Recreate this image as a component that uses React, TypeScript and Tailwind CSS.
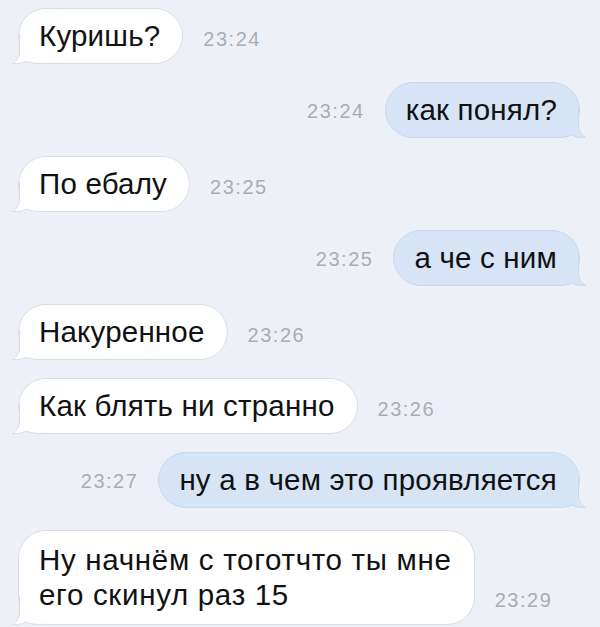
import React from 'react';

type Msg = { text: React.ReactNode; time: string; out?: boolean; multi?: boolean };

const messages: Msg[] = [
  { text: 'Куришь?', time: '23:24' },
  { text: 'как понял?', time: '23:24', out: true },
  { text: 'По ебалу', time: '23:25' },
  { text: 'а че с ним', time: '23:25', out: true },
  { text: 'Накуренное', time: '23:26' },
  { text: 'Как блять ни странно', time: '23:26' },
  { text: 'ну а в чем это проявляется', time: '23:27', out: true },
  {
    text: (
      <>
        Ну начнём с тоготчто ты мне
        <br />
        его скинул раз 15
      </>
    ),
    time: '23:29',
    multi: true,
  },
];

const Tail = ({ out }: { out?: boolean }) => (
  <svg
    width="30"
    height="30"
    viewBox="0 0 30 30"
    className={
      out
        ? 'absolute right-[-7px] bottom-[-1px] -scale-x-100'
        : 'absolute left-[-7px] bottom-[-1px]'
    }
  >
    <path
      d="M8 0 L8 17 C8 23 5 27 0.5 29.5 C6 30 11 29 14.5 27 C18 29 23 29.5 30 29.5 L30 0 Z"
      fill={out ? '#d6e4f6' : '#ffffff'}
    />
    <path
      d="M7.5 0 L7.5 17 C7.5 23 4.5 27 0.5 29.5 C6 30 11 29 14.5 27 C18 29 23 29.5 30 29.5"
      fill="none"
      stroke={out ? '#c8d7ec' : '#d7dde5'}
      strokeWidth="1"
    />
  </svg>
);

const Time = ({ value, className }: { value: string; className?: string }) => (
  <span className={`text-[20px] leading-none tracking-[1.5px] text-[#a9adb3] ${className ?? ''}`}>
    {value}
  </span>
);

export default function App() {
  return (
    <div
      className="min-h-screen w-full bg-[#edf1f7] pt-2 flex flex-col gap-[18px] overflow-hidden"
      style={{ fontFamily: '"Liberation Sans", Arial, sans-serif' }}
    >
      {messages.map((m, i) =>
        m.out ? (
          <div key={i} className="flex items-end justify-end gap-5 pr-5">
            <Time value={m.time} className="mb-[17px]" />
            <div className="relative rounded-[28px] border border-[#c8d7ec] bg-[#d6e4f6] pl-5 pr-[22px] py-[10px] text-[29.5px] leading-[34px] tracking-[0.2px] text-[#111]">
              <Tail out />
              <span className="relative">{m.text}</span>
            </div>
          </div>
        ) : (
          <div key={i} className={`flex items-end gap-5 pl-[18px] ${m.multi ? 'mt-1' : ''}`}>
            <div
              className={`relative rounded-[28px] border border-[#d7dde5] bg-white pl-5 pr-[22px] text-[29.5px] text-[#111] ${
                m.multi
                  ? 'pt-[11px] pb-[12px] leading-[35px] tracking-[0.7px]'
                  : 'py-[10px] leading-[34px] tracking-[0.2px]'
              }`}
            >
              <Tail />
              <span className="relative">{m.text}</span>
            </div>
            <Time value={m.time} className="mb-[15px]" />
          </div>
        )
      )}
    </div>
  );
}
